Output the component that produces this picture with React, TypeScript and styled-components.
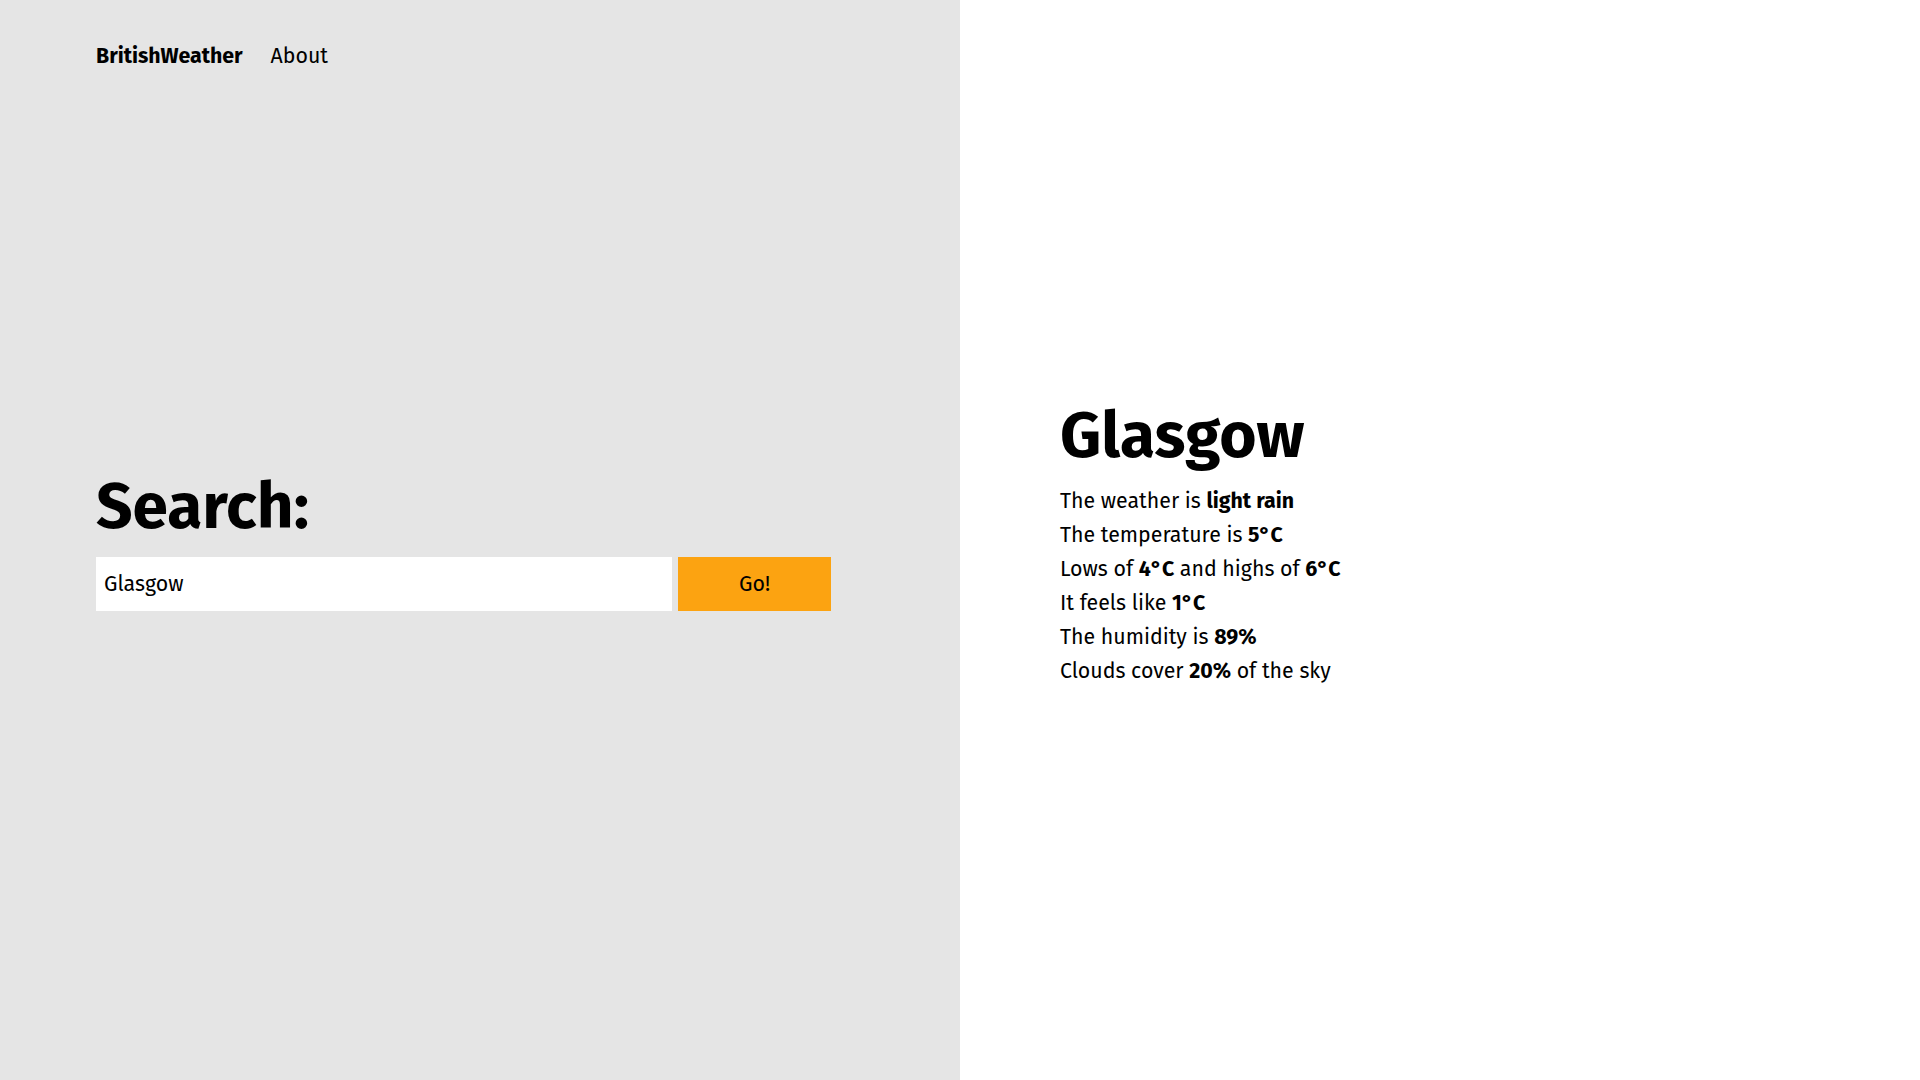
import React, { useState } from "react";
import styled, { createGlobalStyle } from "styled-components";

type Weather = {
  city: string;
  description: string;
  temp: number;
  min: number;
  max: number;
  feelsLike: number;
  humidity: number;
  clouds: number;
};

const weather: Weather = {
  city: "Glasgow",
  description: "light rain",
  temp: 5,
  min: 4,
  max: 6,
  feelsLike: 1,
  humidity: 89,
  clouds: 20,
};

const App: React.FC = () => {
  const [query, setQuery] = useState("Glasgow");

  return (
    <>
      <GlobalStyle />
      <Page>
        <SearchPanel>
          <Nav>
            <Brand>BritishWeather</Brand>
            <NavLink>About</NavLink>
          </Nav>
          <SearchArea>
            <SearchTitle>Search:</SearchTitle>
            <SearchForm onSubmit={(e) => e.preventDefault()}>
              <SearchInput
                type="text"
                value={query}
                onChange={(e) => setQuery(e.target.value)}
              />
              <GoButton type="submit">Go!</GoButton>
            </SearchForm>
          </SearchArea>
        </SearchPanel>
        <ResultPanel>
          <City>{weather.city}</City>
          <Line>
            The weather is <b>{weather.description}</b>
          </Line>
          <Line>
            The temperature is <b>{weather.temp}°C</b>
          </Line>
          <Line>
            Lows of <b>{weather.min}°C</b> and highs of <b>{weather.max}°C</b>
          </Line>
          <Line>
            It feels like <b>{weather.feelsLike}°C</b>
          </Line>
          <Line>
            The humidity is <b>{weather.humidity}%</b>
          </Line>
          <Line>
            Clouds cover <b>{weather.clouds}%</b> of the sky
          </Line>
        </ResultPanel>
      </Page>
    </>
  );
};

const GlobalStyle = createGlobalStyle`
  body {
    margin: 0;
    font-family: "Fira Sans", "Open Sans", "Noto Sans", sans-serif;
    color: #000;
  }
`;

const Page = styled.div`
  display: grid;
  grid-template-columns: 960px 960px;
  height: 100vh;
`;

const SearchPanel = styled.div`
  background: #e5e5e5;
  padding: 0 96px;
  display: flex;
  flex-direction: column;
`;

const Nav = styled.nav`
  display: flex;
  align-items: center;
  gap: 28px;
  padding-top: 43px;
  height: 26px;
  font-size: 21.33px;
  line-height: 26px;
`;

const Brand = styled.a`
  font-weight: 700;
`;

const NavLink = styled.a``;

const SearchArea = styled.div`
  flex: 1;
  display: flex;
  flex-direction: column;
  justify-content: center;
  padding-bottom: 66px;
`;

const SearchTitle = styled.h1`
  font-size: 64px;
  line-height: 1.1;
  font-weight: 700;
  margin: 0 0 14px;
`;

const SearchForm = styled.form`
  display: flex;
  gap: 6px;
`;

const SearchInput = styled.input`
  width: 576px;
  height: 54px;
  box-sizing: border-box;
  border: none;
  outline: none;
  padding: 0 8px;
  font-family: inherit;
  font-size: 21.33px;
  background: #fff;
`;

const GoButton = styled.button`
  width: 153px;
  height: 54px;
  border: none;
  background: #fca311;
  font-family: inherit;
  font-size: 21.33px;
  color: #000;
  cursor: pointer;
`;

const ResultPanel = styled.div`
  background: #fff;
  padding: 6px 0 0 100px;
  display: flex;
  flex-direction: column;
  justify-content: center;
`;

const City = styled.h2`
  font-size: 64px;
  line-height: 1.2;
  font-weight: 700;
  margin: 0 0 10px;
`;

const Line = styled.p`
  font-size: 21.33px;
  line-height: 34px;
  margin: 0;
`;

export default App;
